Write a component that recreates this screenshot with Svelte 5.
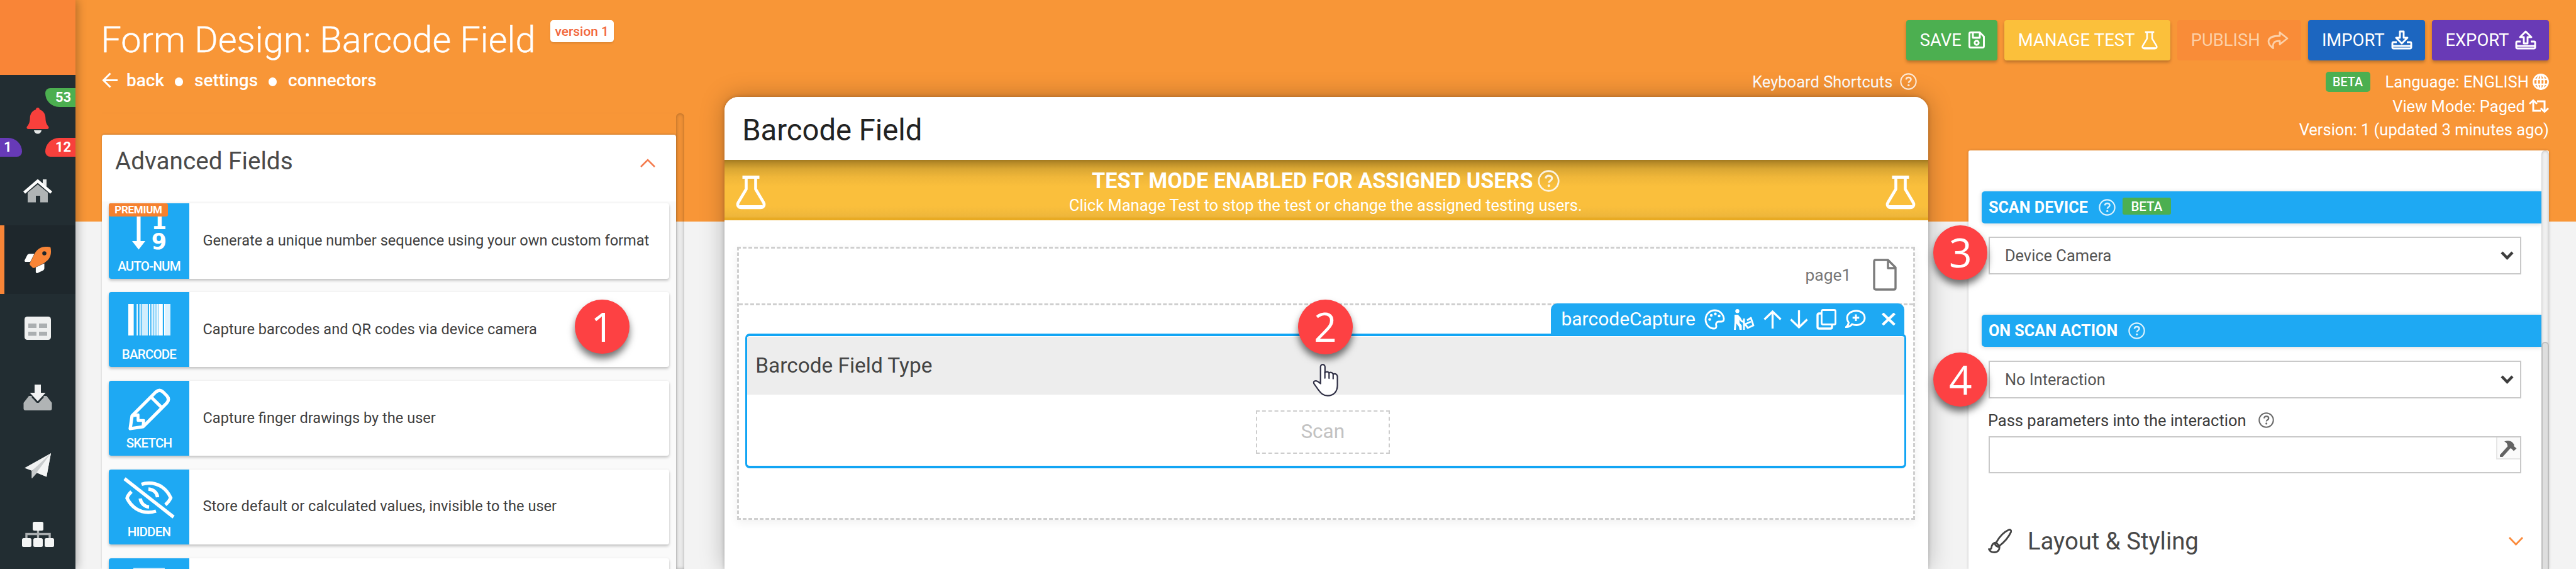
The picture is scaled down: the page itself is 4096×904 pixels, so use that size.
<script>
  const items = [
    { id: 'auto', label: 'AUTO-NUM', text: 'Generate a unique number sequence using your own custom format' },
    { id: 'barcode', label: 'BARCODE', text: 'Capture barcodes and QR codes via device camera' },
    { id: 'sketch', label: 'SKETCH', text: 'Capture finger drawings by the user' },
    { id: 'hidden', label: 'HIDDEN', text: 'Store default or calculated values, invisible to the user' },
    { id: 'more', label: '', text: '' }
  ];
  const bars = [[0, 24], [37, 5], [49, 9, 0.75], [61, 26, 0.8], [92, 6], [102, 10, 0.85], [114, 8, 0.8], [124, 8, 0.9], [134, 19], [159, 6], [165, 22, 0.85]];
  const callouts = [
    { n: 1, x: 957.7, y: 519 },
    { n: 2, x: 2107.4, y: 519.3 },
    { n: 3, x: 3117.2, y: 401.5 },
    { n: 4, x: 3117.2, y: 602.8 }
  ];
</script>

{#snippet help(size)}
  <svg class="ico help" width={size} height={size} viewBox="0 0 24 24" fill="none" stroke="currentColor" stroke-width="1.9">
    <circle cx="12" cy="12" r="10.8" />
    <path d="M8.7 9.2c.3-1.9 1.7-3 3.5-3 2 0 3.4 1.2 3.4 2.9 0 2.6-3.3 2.5-3.3 4.9" stroke-width="2.2" />
    <circle cx="12.2" cy="17.2" r="1.5" fill="currentColor" stroke="none" />
  </svg>
{/snippet}

{#snippet flask(w, h)}
  <svg class="ico" width={w} height={h} viewBox="0 0 48 54" fill="none" stroke="currentColor" stroke-width="4.6" stroke-linejoin="round">
    <path d="M10.500 3h27" stroke-width="5" />
    <path d="M16.500 4v18L4 43c-2.600 4.600.2 8.400 5 8.400h30c4.800 0 7.600-3.800 5-8.400L31.500 22V4" />
    <path d="M6 49.500h36" stroke-width="4" />
  </svg>
{/snippet}

<div class="app">
  <aside>
    <div class="logo"></div>
    <div class="cell bell">
      <span class="tag green">53</span>
      <svg width="36" height="42" viewBox="0 0 36 42">
        <path d="M18 0c2 0 3 1.500 3 3 6 2 9 7 9.300 13 .3 8 1.700 10 5 14.500.8 2-.3 3.500-2 3.500H2.700c-1.700 0-2.800-1.500-2-3.500 3.300-4.500 4.700-6.500 5-14.500C6 10 9 5 15 3c0-1.500 1-3 3-3z" fill="#f8403c" />
        <path d="M12 36h12c-.5 3.500-3 5.500-6 5.500s-5.500-2-6-5.500z" fill="#e6e8e8" />
      </svg>
      <span class="tag violet">1</span>
      <span class="tag red">12</span>
    </div>
    <div class="cell">
      <svg width="46" height="37" viewBox="0 0 46 37">
        <path d="M7 21 23 8l16 13v15.500H27V26h-7v10.500H7z" fill="#b0b4b5" />
        <path d="M31 0h6v12l-6-5z" fill="#e8eaea" />
        <path d="M1.500 21 23 2.500 44.500 21" fill="none" stroke="#fff" stroke-width="4.600" />
      </svg>
    </div>
    <div class="cell active">
      <svg width="42" height="42" viewBox="0 0 512 512">
        <path d="M190 138H95c-16 0-36 12-43 26L2 263c-6 14 3 31 22 31h88z" fill="#fff" />
        <path d="M218 400v88c0 18 20 28 35 21l104-49c15-7 27-26 27-43v-95z" fill="#fff" />
        <path fill-rule="evenodd" d="M505 19c-1-5-6-11-12-12C461 0 435 0 410 0 307 0 245 55 199 128l-85 170c-11 13-18 42-8 57l51 51c11 11 40 7 56-6l171-87c72-46 128-108 128-211 0-25 0-50-7-83zM384 168a40 40 0 1 1 0-80 40 40 0 0 1 0 80z" fill="#f98537" />
      </svg>
    </div>
    <div class="cell">
      <svg width="42" height="37" viewBox="0 0 42 37">
        <rect width="42" height="37" rx="4.500" fill="#eff0f0" />
        <path d="M6 11h13v7H6zm17 0h13v7H23zM6 24h13v6.500H6zm17 0h13v6.500H23z" fill="#abafb1" />
      </svg>
    </div>
    <div class="cell">
      <svg width="46" height="41" viewBox="0 0 46 41">
        <path d="M9 18h7c-3 0-4.500 1 0 5l4 4.500c1 2 5 2 6 0l4-4.500c4.500-4 3-5 0-5h7l8.500 11v9c0 2-1 3-3 3h-39c-2 0-3-1-3-3v-9z" fill="#b0b4b5" />
        <path d="M18 0h10v13h7.500L23 26.500 10.500 13H18z" fill="#f1f2f2" />
      </svg>
    </div>
    <div class="cell">
      <svg width="42" height="41" viewBox="0 0 42 41">
        <path d="M10 27l7 3.500-6 10V27z" fill="#9fa4a6" />
        <path d="M42 0 35 37.500 20 31 35 9 12 28 0 23.500z" fill="#f1f2f2" />
        <path d="M42 0 12 28v12l8-9z" fill="#c9cccd" />
        <path d="M42 0 35 37.500 19 31z" fill="#f4f5f5" />
      </svg>
    </div>
    <div class="cell">
      <svg width="51" height="40" viewBox="0 0 51 40">
        <path d="M7 27v-7.500h37V27M25.500 12v15" fill="none" stroke="#abafb1" stroke-width="3.400" />
        <g fill="#f4f5f5"><rect x="17" width="17" height="14" rx="2.500" /><rect y="26" width="15" height="14" rx="2.500" /><rect x="18" y="26" width="15" height="14" rx="2.500" /><rect x="36" y="26" width="15" height="14" rx="2.500" /></g>
      </svg>
    </div>
  </aside>

  <main>
    <section class="left">
      <div class="headline">
        <h1>Form Design: Barcode Field</h1>
        <span class="ver">version 1</span>
      </div>
      <nav>
        <svg class="ico" width="25" height="25" viewBox="0 0 25 25" fill="none" stroke="#fff" stroke-width="3"><path d="M13.500 1.500 2.500 12.500l11 11M2.500 12.500H25" /></svg>
        <a class="first">back</a><i></i><a>settings</a><i></i><a>connectors</a>
      </nav>
      <div class="scroller">
        <div class="fields">
          <header>
            <h2>Advanced Fields</h2>
            <svg width="24" height="14" viewBox="0 0 24 14" fill="none" stroke="#f47b4d" stroke-width="2.600"><path d="M1 13 12 2l11 11" /></svg>
          </header>
          <div class="list">
            {#each items as it}
              <div class="item">
                <div class="badge">
                  {#if it.id === 'auto'}
                    <svg class="sort" width="54" height="58" viewBox="0 0 54 58" fill="#fff">
                      <path d="M7.500 0h6v42h7.500L10.500 55.500 0 42h7.500z" />
                      <text x="43" y="23" text-anchor="middle" class="digit">1</text>
                      <text x="43" y="55" text-anchor="middle" class="digit">9</text>
                    </svg>
                  {:else if it.id === 'barcode'}
                    <svg class="bars" width="67" height="50" viewBox="0 0 187 160" preserveAspectRatio="none" fill="#fff">
                      {#each bars as b}<rect x={b[0]} width={b[1]} height="160" opacity={b[2] ?? 1} />{/each}
                    </svg>
                  {:else if it.id === 'sketch'}
                    <svg width="67" height="67" viewBox="0 0 67 67" fill="none" stroke="#fff" stroke-width="5.200" stroke-linejoin="round">
                      <path d="M3 64 6 43.500 43.500 6q6-5.500 12 0l5.500 5.500q5.500 6 0 12L23.500 61zM36 13.500 53.500 31" />
                      <path d="M8 43.500 15.500 42v9h9L23.500 59" stroke-width="4.600" />
                    </svg>
                  {:else if it.id === 'hidden'}
                    <svg width="82" height="66" viewBox="0 0 82 66" fill="none" stroke="#fff" stroke-width="5.400">
                      <path d="M2 2.500 80 63.500" />
                      <path d="M13 23c-4 4-6.500 8-7 10.500C13 48 26 56 40 56q6 0 12-2M29 11.500C33 10 37 9.500 41 9.500 56 9.500 69 18 75.500 33c-2 4.500-5 8-8.500 11" />
                      <path d="M40 19c8 .500 14 6 14.500 13M27 34c1 8 7 13 14 13.500" />
                    </svg>
                  {:else}
                    <svg class="cut" width="50" height="4" viewBox="0 0 50 4"><path d="M0 2h50" stroke="#c4e6fb" stroke-width="4" /></svg>
                  {/if}
                  <b>{it.label}</b>
                  {#if it.id === 'auto'}<em>PREMIUM</em>{/if}
                </div>
                <p>{it.text}</p>
              </div>
            {/each}
          </div>
        </div>
        <div class="track"></div>
      </div>
    </section>

    <section class="center">
      <div class="keys"><span>Keyboard Shortcuts</span>{@render help(27)}</div>
      <div class="device">
        <div class="bar">Barcode Field</div>
        <div class="test">
          {@render flask(48, 55)}
          <div class="msg">
            <div class="t1"><strong>TEST MODE ENABLED FOR ASSIGNED USERS</strong>{@render help(35)}</div>
            <div class="t2">Click Manage Test to stop the test or change the assigned testing users.</div>
          </div>
          {@render flask(48, 55)}
        </div>
        <div class="page">
          <div class="pagerow">
            <span>page1</span>
            <svg class="ico" width="38" height="51" viewBox="0 0 38 51" fill="none" stroke="#7b7b7b" stroke-width="3.400" stroke-linejoin="round"><path d="M4 2h20l12 12v32.500q0 2.500-2.500 2.500h-29Q2 49 2 46.500V4.500Q2 2 4 2zM24 2v13h12" /></svg>
          </div>
          <div class="tools">
            <span>barcodeCapture</span>
            <svg width="33" height="33" viewBox="0 0 33 33" fill="none" stroke="#fff" stroke-width="2.800">
              <path d="M16.500 2C8.500 2 2 8.500 2 16.500S8 31 15.500 31c3 0 4-2.500 3.300-5-.8-3.500 1-6 4-6H27c3 0 4.300-2 4-5C30 7.500 24 2 16.500 2z" />
              <g fill="#fff" stroke="none"><circle cx="8.500" cy="16.500" r="2.200" /><circle cx="11" cy="10" r="2.200" /><circle cx="17.500" cy="7.700" r="2.200" /><circle cx="23.500" cy="11" r="2.200" /></g>
            </svg>
            <svg class="g13" width="34" height="33" viewBox="0 0 34 33" fill="none" stroke="#fff" stroke-width="2.800" stroke-linejoin="round">
              <circle cx="6.500" cy="3.300" r="3.200" fill="#fff" stroke="none" />
              <path d="M3 9h5l2 4v9l3.500 4V33H10l-1-5-4-5-1 10H1l1-12V9z" fill="#fff" stroke="none" />
              <path d="M9 12l4 7 4 2v12M17 15v8l5 5M22 18l6-4 4 12-9 4-4-6 9-4" />
            </svg>
            <svg class="g14" width="29" height="29" viewBox="0 0 29 29" fill="none" stroke="#fff" stroke-width="3.300"><path d="M1.500 14.500 14.500 2l13 12.500M14.500 2v27" /></svg>
            <svg class="g14" width="29" height="29" viewBox="0 0 29 29" fill="none" stroke="#fff" stroke-width="3.300"><path d="M1.500 14.500 14.500 27l13-12.500M14.500 27V0" /></svg>
            <svg class="g13" width="33" height="33" viewBox="0 0 33 33" fill="none" stroke="#fff" stroke-width="2.800"><rect x="8.500" y="1.500" width="22" height="23" rx="2" /><path d="M8 7H4.500Q2 7 2 9.500v19Q2 31 4.500 31h18q2.500 0 2.500-2.500V25" stroke-width="3.400" /></svg>
            <svg class="g13" width="33" height="30" viewBox="0 0 33 30" fill="none" stroke="#fff" stroke-width="2.900"><path d="M17.500 1.700C25 1.700 31 6.500 31 13s-6 11.500-13.500 11.500c-2.500 0-4.500-.500-6.500-1.500-2 2.500-5.500 4.500-9.500 4.500 2-1.500 3.500-4 4-7C4 18.500 3 16 3 13 3 6.500 10 1.700 17.500 1.700zM17 7.500v10.500M11.700 12.800h10.600" /></svg>
            <svg class="g25" width="22" height="20" viewBox="0 0 22 20" fill="none" stroke="#fff" stroke-width="4.200"><path d="M1.500 1 20.500 19M20.500 1 1.500 19" /></svg>
          </div>
          <div class="field">
            <div class="fhead">Barcode Field Type</div>
            <div class="scan">Scan</div>
          </div>
        </div>
      </div>
    </section>

    <section class="right">
      <div class="buttons">
        <button class="save">SAVE
          <svg width="26" height="27" viewBox="0 0 26 27" fill="none" stroke="#fff" stroke-width="2.900" stroke-linejoin="round"><path d="M4 1.500h14L24.500 8v15.500q0 2-2 2H3.500q-2 0-2-2V3.500q0-2 2.500-2zM7 2v8h11V2" /><circle cx="13" cy="18" r="3.200" /></svg>
        </button>
        <button class="manage">MANAGE TEST {@render flask(26, 30)}</button>
        <button class="publish">PUBLISH
          <svg width="34" height="30" viewBox="0 0 34 30" fill="none" stroke="#fcd0a8" stroke-width="2.800" stroke-linejoin="round"><path d="M20 2.500 32 12 20 21.500V16c-8 0-12 2-10.500 11.500C3 23 1 19 2.500 14.500 4.500 9 11 8 20 8z" /></svg>
        </button>
        <button class="import">IMPORT
          <svg width="34" height="31" viewBox="0 0 34 31" fill="none" stroke="#fff" stroke-width="2.900" stroke-linejoin="round"><path d="M14 2h6v10h6l-9 9-9-9h6zM9 19H3.500Q2 19 2 21v6q0 2 2 2h26q2 0 2-2v-6q0-2-1.500-2H25M2 25h30" /></svg>
        </button>
        <button class="export">EXPORT
          <svg width="34" height="31" viewBox="0 0 34 31" fill="none" stroke="#fff" stroke-width="2.900" stroke-linejoin="round"><path d="M14 21V11H8l9-9 9 9h-6v10zM9 18H3.500Q2 18 2 20v7q0 2 2 2h26q2 0 2-2v-7q0-2-1.500-2H25M2 25h30" /></svg>
        </button>
      </div>
      <div class="meta lang"><span class="beta">BETA</span><span>Language: ENGLISH</span>
        <svg width="26" height="26" viewBox="0 0 26 26" fill="none" stroke="#fff" stroke-width="2.600"><circle cx="13" cy="13" r="11.600" /><ellipse cx="13" cy="13" rx="5.600" ry="11.600" /><path d="M2 9h22M2 17h22M13 1v24" /></svg>
      </div>
      <div class="meta"><span>View Mode: Paged</span>
        <svg width="32" height="21" viewBox="0 0 32 21" fill="none" stroke="#fff" stroke-width="3"><path d="M7 3v15h12M25 18V3H13" /><path d="M1 7 7 1.500 13 7M19 14l6 5.500L31 14" /></svg>
      </div>
      <div class="meta"><span>Version: 1 (updated 3 minutes ago)</span></div>
      <div class="panel">
        <div class="props">
          <div class="strip s1"><b>SCAN DEVICE</b>{@render help(27)}<span class="beta small">BETA</span></div>
          <div class="select a"><span>Device Camera</span><svg width="21" height="14" viewBox="0 0 21 14" fill="none" stroke="#3d3d3d" stroke-width="4.400"><path d="M2 2l8.500 8.800L19 2" /></svg></div>
          <div class="strip s2"><b>ON SCAN ACTION</b>{@render help(27)}</div>
          <div class="select b"><span>No Interaction</span><svg width="21" height="14" viewBox="0 0 21 14" fill="none" stroke="#3d3d3d" stroke-width="4.400"><path d="M2 2l8.500 8.800L19 2" /></svg></div>
          <div class="lbl"><span>Pass parameters into the interaction</span>{@render help(25)}</div>
          <div class="input">
            <div class="tool"><svg width="27" height="26" viewBox="0 0 27 26"><path d="M2.500 24 16 9" stroke="#636363" stroke-width="5.400" stroke-linecap="round" /><path d="M7 1.500C12-.5 17 0 20 3l2.500 3v3l4 3.500-4.500 4-4-4-3-.5-3-4C12 5 10.500 3 7 1.500z" fill="#636363" /></svg></div>
          </div>
          <div class="acc">
            <svg width="38" height="39" viewBox="0 0 38 39" fill="none" stroke="#444" stroke-width="2.800" stroke-linejoin="round"><path d="M13 22C18 13 26 5 33 1.800c2.500-1 4.500 1 3.500 3.500C33 13 26 21 18 27.500zM13 22c-5 .500-7 4-7.500 8 0 2-2 3-4 2.500C3 36 6 37.500 10 37.500c6 0 9-4.500 8-10M11 24c1 3 3 4.500 6.500 5" /></svg>
            <span>Layout &amp; Styling</span>
            <svg width="23" height="14" viewBox="0 0 23 14" fill="none" stroke="#fb8b3c" stroke-width="2.800"><path d="M1 1l10.500 11L22 1" /></svg>
          </div>
        </div>
        <div class="rail"><div></div></div>
      </div>
    </section>
  </main>

  {#each callouts as c}
    <div class="callout" style="left:{c.x - 43.3}px;top:{c.y - 43.3}px">{c.n}</div>
  {/each}
  <svg class="cursor" width="43" height="55" viewBox="156 360 139 178" fill="#fff" stroke="#2f2f45" stroke-width="7" stroke-linejoin="round" stroke-linecap="round">
    <path d="M197 379a11.500 12 0 0 1 23 0v29q12-9 21 2 13-7 21 6 19-5 22 12v45c0 34-20 54-50 54-24 0-36-14-48-30l-23-32q-4-14 9-14 10 0 25 14z" />
    <path d="M219.500 406v31M241 412v26M262 418v22" fill="none" />
  </svg>
</div>

<style>
  :global(body) { margin: 0; overflow: hidden; }
  .app, .app :global(*) { box-sizing: border-box; }
  .app { position: relative; display: flex; width: 4096px; height: 904px; overflow: hidden; font-family: Roboto, "Open Sans", sans-serif; color: #444; background: #f3f3f3; white-space: nowrap; }
  svg { display: block; flex: none; }
  h1, h2, p { margin: 0; font-weight: 400; }

  aside { flex: none; width: 120px; background: #222d32; z-index: 2; box-shadow: 3px 0 14px rgba(0, 0, 0, .28); display: flex; flex-direction: column; }
  .logo { height: 120px; background: #f98537; }
  .cell { height: 109.200px; flex: none; display: flex; align-items: center; justify-content: center; }
  .cell.bell { position: relative; height: 129.600px; padding-top: 20px; }
  .cell.bell svg { margin-top: -5px; }
  .cell.active { background: #1e272c; border-left: 7px solid #f98537; padding-right: 7px; }
  .tag { position: absolute; height: 30px; color: #fff; font: 700 22px/29px Roboto, sans-serif; }
  .green { right: 0; top: 21px; width: 48px; background: #4caf50; padding-left: 16px; border-radius: 8px 0 0 22px; }
  .red { right: 0; top: 100px; width: 48px; background: #f8403c; padding-left: 16px; border-radius: 22px 0 0 8px; }
  .violet { left: 0; top: 100px; width: 35px; background: #673ab7; padding-left: 6px; border-radius: 0 22px 8px 0; }

  main { flex: 1; display: flex; align-items: flex-start; height: 904px; background: linear-gradient(#f89637 352px, #f3f3f3 352px); }

  .left { width: 926px; margin-left: 42px; height: 904px; display: flex; flex-direction: column; }
  .headline { flex: none; display: flex; align-items: flex-start; padding-top: 32px; height: 110.500px; color: #fff; }
  h1 { width: 692px; font-size: 57.600px; font-weight: 300; line-height: 60px; margin: 1.500px 0 0 -1.500px; -webkit-text-stroke: .4px #fff; }
  .ver { margin-left: 22px; height: 34.500px; padding: 0 8px; border-radius: 5px; background: #fff; color: #f2673c; font-weight: 500; font-size: 20.900px; line-height: 36px; box-shadow: 0 2px 3px rgba(0, 0, 0, .1); }
  nav { flex: none; display: flex; align-items: center; height: 32px; color: #fff; font-size: 28px; font-weight: 500; line-height: 32px; position: relative; top: 1px; }
  nav a.first { margin-left: 14px; }
  nav i { width: 13.500px; height: 13.500px; border-radius: 50%; background: #fff; margin: 5px 18px 0 16.500px; }
  .scroller { flex: 1; min-height: 0; margin-top: 36px; display: flex; width: 926px; border-top: 1px solid rgba(0, 0, 0, .02); }
  .track { width: 12.500px; background: rgba(0, 0, 0, .035); box-shadow: inset 0 0 5px rgba(0, 0, 0, .3); border-radius: 6px 6px 0 0; }
  .fields { width: 913.300px; margin-top: 34px; border-radius: 4px 4px 0 0; background: #fff; box-shadow: 0 -1px 3px rgba(0, 0, 0, .18); }
  .fields header { display: flex; justify-content: space-between; height: 106px; padding: 20.500px 33px 0 21px; }
  h2 { font-size: 38.700px; line-height: 44px; color: #4a4a4a; }
  .fields header svg { margin-top: 18px; }
  .list { background: #fafafa; padding: 3.500px 11px 0; height: 586px; overflow: hidden; display: flex; flex-direction: column; gap: 21.400px; }
  .item { flex: none; display: flex; align-items: center; height: 119.500px; background: #fff; border-radius: 4px; box-shadow: 0 3px 4px rgba(0, 0, 0, .2), 0 0 4px rgba(0, 0, 0, .06); }
  .badge { position: relative; flex: none; width: 128px; height: 119.500px; background: #1ea9f3; border-radius: 4px 0 0 4px; display: flex; flex-direction: column; align-items: center; justify-content: space-between; padding: 12px 0 9px; color: #fff; }
  .badge b { font-size: 20.500px; font-weight: 500; line-height: 24px; letter-spacing: -.8px; position: relative; top: 1px; }
  .badge svg { margin-bottom: -4px; }
  .badge svg.bars { margin-top: 7px; }
  .badge svg.cut { margin-top: 3.500px; }
  .badge svg.sort { margin-top: 6px; overflow: visible; }
  .digit { font: 700 35px "DejaVu Sans", sans-serif; }
  .badge em { position: absolute; left: 0; top: 0; width: 94px; height: 21px; background: #f5812f; border-radius: 3px; font: 700 17px/20px Roboto, sans-serif; letter-spacing: -.3px; text-align: center; }
  .item p { font-size: 23.600px; color: #3f3f3f; margin-left: 21.500px; line-height: 28px; padding-bottom: 2px; }

  .center { width: 1914.200px; margin-left: 63.700px; height: 904px; display: flex; flex-direction: column; }
  .keys { flex: none; display: flex; justify-content: flex-end; align-items: flex-start; gap: 12px; padding: 115px 17.500px 0 0; height: 154.200px; color: #fff; font-size: 25.500px; line-height: 30px; }
  .keys :global(.help) { margin-top: 1px; opacity: .8; }
  .device { flex: 1; min-height: 0; background: #fff; border-radius: 22px 22px 0 0; box-shadow: 0 0 38px rgba(0, 0, 0, .26), 0 0 6px rgba(0, 0, 0, .22); display: flex; flex-direction: column; }
  .bar { flex: none; height: 99.800px; padding: 4px 0 0 28.500px; font-size: 47.200px; line-height: 98px; color: #222; background: #fff; border-radius: 22px 22px 0 0; }
  .test { flex: none; height: 96px; display: flex; justify-content: space-between; padding: 0 20px 0 18px; color: #fff; background: linear-gradient(#a27a20 0, #b98c28 5px, #d9a633 14px, #efb639 27px, #fabf3c 42px, #fabf3c 74px, #eeb63b 90px, #e8aa23 93px, #e9ab24 96px); }
  .test > :global(svg) { margin-top: 24px; }
  .msg { display: flex; flex-direction: column; align-items: center; padding-top: 13.400px; }
  .t1 { display: flex; align-items: center; gap: 7px; font-size: 34.200px; line-height: 40px; }
  .t1 :global(.help) { opacity: .85; }
  .t2 { font-size: 25.500px; line-height: 30px; margin-top: 3.800px; }
  .page { flex: none; margin: 42.500px 20.500px 0; height: 433.500px; border: 3px dashed #cfcfcf; box-shadow: 0 5px 14px rgba(0, 0, 0, .06); }
  .pagerow { display: flex; align-items: center; justify-content: flex-end; gap: 35px; height: 90px; border-bottom: 3px dashed #cfcfcf; padding: 0 26px 4px 0; color: #777; font-size: 26.400px; }
  .tools { position: relative; margin: -3px 14px 0 auto; width: 562px; height: 50px; background: #1ea9f3; border-radius: 10px 10px 0 0; display: flex; align-items: center; padding-left: 16px; color: #fff; font-size: 30px; line-height: 36px; }
  .tools span { width: 212px; margin-right: 16px; }
  .g13 { margin-left: 13px; }
  .g14 { margin-left: 13.500px; }
  .g25 { margin-left: 25px; }
  .field { margin: -2px 11px 0 10px; height: 214px; border: 4px solid #12a5f4; border-width: 4.500px 3px; border-radius: 7px; padding-top: 1px; }
  .fhead { height: 92px; background: #ededed; padding-left: 13px; font-size: 33.400px; line-height: 92px; color: #444; }
  .scan { width: 213.500px; height: 69px; margin: 25px auto 0; transform: translateX(-5px); border: 2.500px dashed #cdcdcd; text-align: center; font-size: 31.500px; line-height: 64px; color: #c2c2c2; }

  .right { width: 923px; margin-left: 64px; height: 904px; display: flex; flex-direction: column; align-items: flex-end; color: #fff; }
  .buttons { flex: none; display: flex; gap: 11.200px; margin-top: 32px; }
  button { display: flex; align-items: center; justify-content: space-between; flex: none; height: 64px; border: 0; border-radius: 4px; padding: 0 20px 1px 21.500px; color: #fff; font: 400 27.400px/32px Roboto, sans-serif; box-shadow: 0 3px 5px rgba(0, 0, 0, .25); }
  .save { width: 144.800px; background: #4caf50; }
  .manage { width: 263.700px; background: #fbc03b; letter-spacing: .12px; }
  .publish { width: 197px; background: #f98c38; color: #fcd0a8; box-shadow: none; }
  .import { width: 185.300px; background: #1c66c0; }
  .export { width: 186px; background: #693ab6; }
  .meta { flex: none; display: flex; align-items: center; font-size: 25.500px; line-height: 32px; height: 37px; }
  .meta svg { margin-left: 6px; }
  .lang { margin-top: 17px; height: 33px; }
  .lang + .meta { margin-top: 4px; }
  .beta { margin-right: 24px; width: 71px; height: 32px; border-radius: 5px; background: #4caf50; text-align: center; font-weight: 500; font-size: 19.700px; line-height: 33px; color: #fff; }
  .panel { margin-top: 15px; width: 923px; flex: 1; min-height: 0; display: flex; background: #fff; color: #444; border-radius: 3px 3px 0 0; box-shadow: 0 0 4px rgba(0, 0, 0, .2); }
  .props { width: 911px; }
  .rail { width: 12px; background: #f0f0f0; box-shadow: inset 0 0 4px rgba(0, 0, 0, .25); border-radius: 6px 6px 0 0; padding-top: 304px; }
  .rail div { height: 361px; background: #dedede; border: 2.500px solid #bdbdbd; border-bottom: 0; border-radius: 6px 6px 0 0; }
  .strip { margin-left: 21px; display: flex; align-items: center; height: 51.500px; padding-left: 11px; border-radius: 5px 0 0 5px; background: #1ea9f3; color: #fff; font-size: 25.200px; box-shadow: 0 1px 7px rgba(0, 0, 0, .16); }
  .strip :global(.help) { margin-left: 17px; opacity: .85; }
  .s1 { margin-top: 0; }
  .props { padding-top: 64.500px; }
  .s2 { margin-top: 63.500px; }
  .small { margin: -4px 0 0 11px; width: 77px; height: 27.500px; font-size: 20.500px; line-height: 28.500px; border-radius: 3px; }
  .select { margin-left: 32px; width: 847px; border: 2px solid #c9c9c9; background: #fff; height: 60px; display: flex; align-items: center; justify-content: space-between; padding: 0 10px 0 24px; font-size: 25.400px; color: #555; }
  .select.a { margin-top: 21px; }
  .select.b { margin-top: 21.500px; }
  .lbl { margin: 19px 0 0 31px; height: 32px; display: flex; align-items: center; gap: 19px; font-size: 25.500px; line-height: 32px; color: #3c3c3c; }
  .lbl :global(.help) { color: #6a6a6a; }
  .input { margin: 9px 0 0 32px; width: 847px; height: 59px; border: 2px solid #c9c9c9; display: flex; justify-content: flex-end; }
  .tool { width: 38px; height: 35px; border: 1px solid #e6e6e6; border-width: 0 0 2px 2px; background: #fafafa; padding: 5px 0 0 4px; }
  .acc { margin: 84px 29px 0 31px; height: 48px; display: flex; align-items: center; font-size: 38.300px; line-height: 48px; color: #484848; }
  .acc span { margin: 0 auto 0 25px; }

  .callout { position: absolute; z-index: 5; width: 86.600px; height: 86.600px; border-radius: 50%; background: #fd4143; color: #fff; text-align: center; font: 400 64px/86px "Open Sans", sans-serif; box-shadow: 0 8px 12px rgba(0, 0, 0, .55); }
  .cursor { position: absolute; z-index: 5; left: 2087px; top: 577px; }
</style>
